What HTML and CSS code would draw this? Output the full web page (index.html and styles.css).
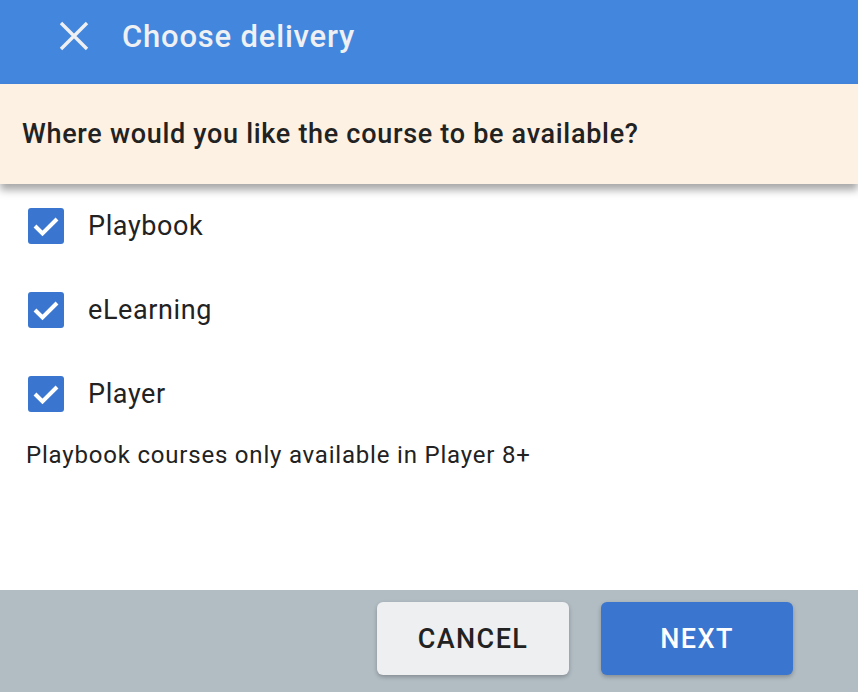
FILE: index.html
```html
<!DOCTYPE html>
<html lang="en">
<head>
    <meta charset="UTF-8">
    <title>Choose delivery</title>
    <link rel="stylesheet" href="styles.css">
</head>
<body>
    <div class="dialog">
        <div class="topbar">
            <button class="close" aria-label="Close">
                <svg width="30" height="30" viewBox="0 0 30 30">
                    <path d="M2 2 L28 28 M28 2 L2 28" stroke="currentColor" stroke-width="3.4" fill="none"/>
                </svg>
            </button>
            <h1>Choose delivery</h1>
        </div>
        <div class="question">Where would you like the course to be available?</div>

        <div class="options">
            <label class="option">
                <span class="box"><svg width="36" height="36" viewBox="0 0 36 36"><path d="M7 18 L14.5 25.5 L29 11" stroke="#fff" stroke-width="4" fill="none"/></svg></span>
                <span class="label">Playbook</span>
            </label>
            <label class="option">
                <span class="box"><svg width="36" height="36" viewBox="0 0 36 36"><path d="M7 18 L14.5 25.5 L29 11" stroke="#fff" stroke-width="4" fill="none"/></svg></span>
                <span class="label">eLearning</span>
            </label>
            <label class="option">
                <span class="box"><svg width="36" height="36" viewBox="0 0 36 36"><path d="M7 18 L14.5 25.5 L29 11" stroke="#fff" stroke-width="4" fill="none"/></svg></span>
                <span class="label">Player</span>
            </label>
            <p class="note">Playbook courses only available in Player 8+</p>
        </div>

        <div class="footer">
            <button class="btn cancel">CANCEL</button>
            <button class="btn next">NEXT</button>
        </div>
    </div>
</body>
</html>
```

FILE: styles.css
```css
html, body {
    margin: 0;
    padding: 0;
    height: 100%;
}
body {
    font-family: Roboto, "Liberation Sans", sans-serif;
    background-color: #fff;
    color: #222;
}
.dialog {
    display: flex;
    flex-direction: column;
    height: 100%;
}
.topbar {
    height: 84px;
    background-color: #4386dd;
    display: flex;
    align-items: center;
    padding-left: 59px;
    box-sizing: border-box;
    flex-shrink: 0;
}
.close {
    background: none;
    border: none;
    padding: 0;
    color: #eef0f3;
    width: 30px;
    height: 30px;
    display: flex;
    margin-top: -12px;
}
.topbar h1 {
    margin: -12px 0 0 33px;
    font-size: 31px;
    font-weight: 500;
    color: #eef0f3;
    letter-spacing: 0.8px;
}
.question {
    height: 100px;
    background-color: #fcf1e2;
    display: flex;
    align-items: center;
    padding-left: 22px;
    font-size: 27px;
    font-weight: 500;
    letter-spacing: 0.7px;
    color: #222;
    box-shadow: 0 6px 8px rgba(0, 0, 0, 0.35);
    position: relative;
    z-index: 1;
    flex-shrink: 0;
}
.options {
    flex: 1;
}
.option {
    height: 84px;
    display: flex;
    align-items: center;
    padding-left: 28px;
}
.box {
    width: 36px;
    height: 36px;
    background-color: #3a75cf;
    border-radius: 3px;
    display: flex;
}
.label {
    margin-left: 24px;
    font-size: 27px;
    letter-spacing: 0.6px;
    color: #222;
}
.note {
    margin: 0;
    padding-left: 26px;
    line-height: 38px;
    font-size: 24px;
    letter-spacing: 0.8px;
    color: #222;
}
.footer {
    height: 102px;
    background-color: #b1bcc3;
    display: flex;
    justify-content: flex-end;
    align-items: flex-start;
    gap: 32px;
    padding: 12px 65px 0 0;
    box-sizing: border-box;
    flex-shrink: 0;
}
.btn {
    width: 192px;
    height: 73px;
    border: none;
    border-radius: 6px;
    font-family: Roboto, "Liberation Sans", sans-serif;
    font-size: 27px;
    font-weight: 500;
    letter-spacing: 1.4px;
    box-shadow: 0 2px 4px rgba(0, 0, 0, 0.25);
    cursor: pointer;
}
.cancel {
    background-color: #eeeff1;
    color: #222;
}
.next {
    background-color: #3a75cf;
    color: #fff;
}
```
